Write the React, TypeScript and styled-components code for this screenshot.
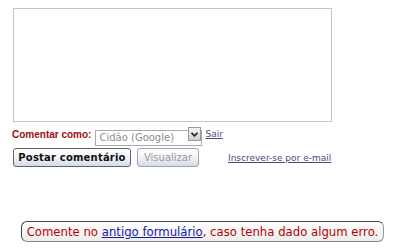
import React from 'react';
import styled, { createGlobalStyle } from 'styled-components';

const Global = createGlobalStyle`
  html, body { margin: 0; padding: 0; background: #fff; }
  body { font-family: "DejaVu Sans", Verdana, sans-serif; }
`;

const Page = styled.div`
  width: 400px;
  height: 250px;
  padding: 8px 0 0 13px;
  box-sizing: border-box;
  display: flex;
  flex-direction: column;
`;

const TextBox = styled.textarea`
  width: 319px;
  height: 114px;
  box-sizing: border-box;
  border: 1px solid #c4c4c4;
  resize: none;
  margin: 0;
  padding: 2px;
  outline: none;
`;

const IdentityRow = styled.div`
  display: flex;
  align-items: center;
  margin-top: 4px;
  height: 16px;
`;

const Label = styled.span`
  font-family: "Liberation Sans", Arial, sans-serif;
  font-weight: bold;
  font-size: 10px;
  color: #9c0c12;
  margin-left: -1px;
  margin-right: 4px;
`;

const SelectWrap = styled.div`
  position: relative;
  width: 107px;
  height: 16px;
`;

const Select = styled.select`
  appearance: none;
  width: 100%;
  height: 100%;
  box-sizing: border-box;
  font-family: "DejaVu Sans", Tahoma, sans-serif;
  font-size: 10px;
  color: #8c8c8c;
  border: 1px solid #a9a9a9;
  padding: 0 0 0 3px;
  margin: 0;
  background: #fff;
  outline: none;
`;

const ArrowBox = styled.span`
  position: absolute;
  top: 1px;
  right: 1px;
  width: 13px;
  height: 14px;
  box-sizing: border-box;
  border: 1px solid #9a9a9a;
  background: linear-gradient(#f4f4f4, #cfcfcf);
  display: flex;
  align-items: center;
  justify-content: center;
  pointer-events: none;
`;

const SmallLink = styled.a<{ $indent?: number }>`
  font-family: "DejaVu Sans", Verdana, sans-serif;
  font-size: 9px;
  color: #4b4b7a;
  text-decoration: underline;
  margin-left: ${({ $indent }) => $indent ?? 3}px;
`;

const ActionRow = styled.div`
  display: flex;
  align-items: center;
  margin-top: 6px;
`;

const Button = styled.button<{ $muted?: boolean }>`
  height: 19px;
  width: ${({ $muted }) => ($muted ? 62 : 118)}px;
  padding: 0;
  margin: 0 6px 0 0;
  font-family: "DejaVu Sans", Tahoma, sans-serif;
  font-size: 10px;
  letter-spacing: ${({ $muted }) => ($muted ? '0' : '0.2px')};
  font-weight: ${({ $muted }) => ($muted ? 'normal' : 'bold')};
  color: ${({ $muted }) => ($muted ? '#9a9a9a' : '#111')};
  border: 1px solid ${({ $muted }) => ($muted ? '#9aa4b0' : '#5c6670')};
  border-radius: 3px;
  background: linear-gradient(#ffffff, #eef1f5 55%, #d5dbe3);
`;

const Notice = styled.div`
  align-self: flex-start;
  margin: 54px 0 0 8px;
  width: 363px;
  height: 21px;
  box-sizing: border-box;
  border: 1px solid #444;
  border-right-color: #999;
  border-bottom-color: #888;
  border-radius: 6px;
  background: linear-gradient(#ffffff, #ececec);
  display: flex;
  align-items: center;
  justify-content: center;
  font-family: "DejaVu Sans", Verdana, sans-serif;
  font-size: 11.7px;
  color: #b80000;
  white-space: nowrap;
`;

const NoticeLink = styled.a`
  color: #1a1aa6;
  text-decoration: underline;
`;

export default function App() {
  return (
    <>
      <Global />
      <Page>
        <TextBox />
        <IdentityRow>
          <Label>Comentar como:</Label>
          <SelectWrap>
            <Select defaultValue="g">
              <option value="g">Cidão (Google)</option>
            </Select>
            <ArrowBox>
              <svg width="7" height="5" viewBox="0 0 7 5">
                <path d="M0.5 0.8 L3.5 3.8 L6.5 0.8" stroke="#222" strokeWidth="1.6" fill="none" />
              </svg>
            </ArrowBox>
          </SelectWrap>
          <SmallLink href="#">Sair</SmallLink>
        </IdentityRow>
        <ActionRow>
          <Button>Postar comentário</Button>
          <Button $muted>Visualizar</Button>
          <SmallLink href="#" $indent={23}>Inscrever-se por e-mail</SmallLink>
        </ActionRow>
        <Notice>
          Comente no&nbsp;<NoticeLink href="#">antigo formulário</NoticeLink>, caso tenha dado algum erro.
        </Notice>
      </Page>
    </>
  );
}
